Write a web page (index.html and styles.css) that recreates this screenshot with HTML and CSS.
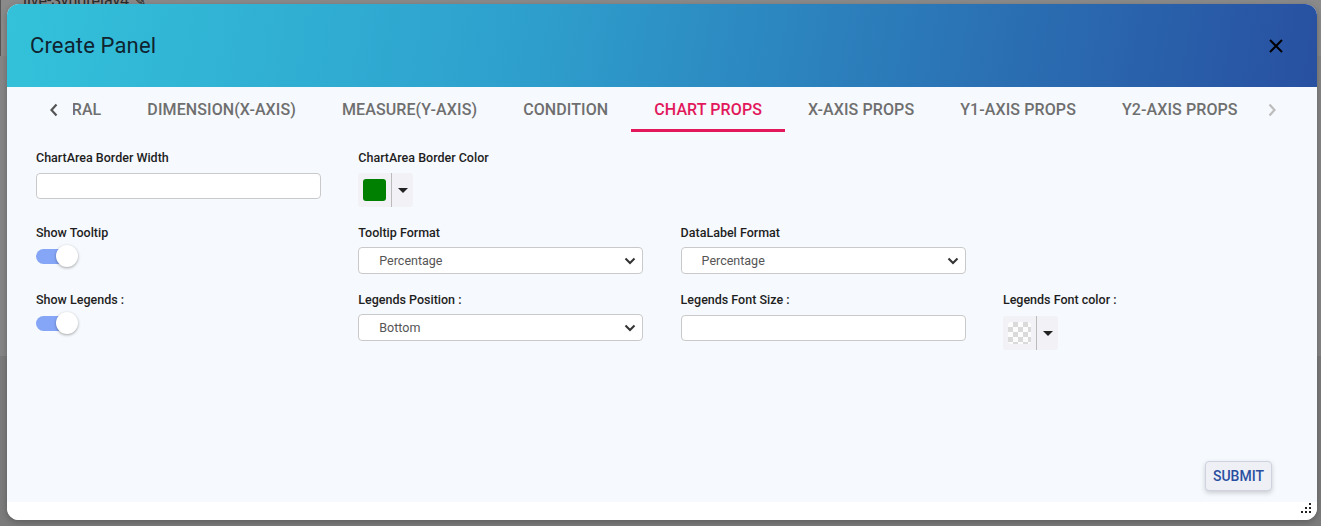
FILE: index.html
```html
<!DOCTYPE html>
<html>
<head>
<meta charset="utf-8">
<link rel="stylesheet" href="styles.css">
</head>
<body>
<div class="page">
  <div class="page-crumb">live-Syndrelay4 ✎</div>
  <div class="page-band"></div>
</div>
<div class="modal">
  <div class="modal-header">
    <h1 class="modal-title">Create Panel</h1>
    <button class="close-btn" aria-label="close">
      <svg width="14" height="14" viewBox="0 0 14 14"><path d="M1 1L13 13M13 1L1 13" stroke="#000" stroke-width="2" fill="none"/></svg>
    </button>
  </div>
  <div class="tabs">
    <div class="tab-arrow left">
      <svg width="10" height="14" viewBox="0 0 10 14"><path d="M7.5 1.5L2.5 7l5 5.5" stroke="#555" stroke-width="2.2" fill="none"/></svg>
    </div>
    <div class="tab-scroller">
      <div class="tab-strip">
        <div class="tab">GENERAL</div>
        <div class="tab">DIMENSION(X-AXIS)</div>
        <div class="tab">MEASURE(Y-AXIS)</div>
        <div class="tab">CONDITION</div>
        <div class="tab active">CHART PROPS</div>
        <div class="tab">X-AXIS PROPS</div>
        <div class="tab">Y1-AXIS PROPS</div>
        <div class="tab">Y2-AXIS PROPS</div>
      </div>
    </div>
    <div class="tab-arrow right">
      <svg width="10" height="14" viewBox="0 0 10 14"><path d="M2.5 1.5L7.5 7l-5 5.5" stroke="#bdbdbd" stroke-width="2.2" fill="none"/></svg>
    </div>
  </div>
  <div class="modal-content">
    <div class="form-grid">
      <div class="field">
        <label class="field-label">ChartArea Border Width</label>
        <input class="text-input" type="text">
      </div>
      <div class="field">
        <label class="field-label">ChartArea Border Color</label>
        <div class="color-picker">
          <span class="swatch green"></span>
          <span class="picker-split"></span>
          <span class="picker-caret"></span>
        </div>
      </div>
      <div class="field"></div>
      <div class="field"></div>

      <div class="field">
        <label class="field-label">Show Tooltip</label>
        <div class="toggle"><span class="toggle-track"></span><span class="toggle-knob"></span></div>
      </div>
      <div class="field">
        <label class="field-label">Tooltip Format</label>
        <div class="select"><span>Percentage</span>
          <svg width="12" height="8" viewBox="0 0 12 8"><path d="M1.5 1.5L6 6l4.5-4.5" stroke="#333" stroke-width="2" fill="none"/></svg>
        </div>
      </div>
      <div class="field">
        <label class="field-label">DataLabel Format</label>
        <div class="select"><span>Percentage</span>
          <svg width="12" height="8" viewBox="0 0 12 8"><path d="M1.5 1.5L6 6l4.5-4.5" stroke="#333" stroke-width="2" fill="none"/></svg>
        </div>
      </div>
      <div class="field"></div>

      <div class="field">
        <label class="field-label">Show Legends :</label>
        <div class="toggle"><span class="toggle-track"></span><span class="toggle-knob"></span></div>
      </div>
      <div class="field">
        <label class="field-label">Legends Position :</label>
        <div class="select"><span>Bottom</span>
          <svg width="12" height="8" viewBox="0 0 12 8"><path d="M1.5 1.5L6 6l4.5-4.5" stroke="#333" stroke-width="2" fill="none"/></svg>
        </div>
      </div>
      <div class="field">
        <label class="field-label">Legends Font Size :</label>
        <input class="text-input" type="text">
      </div>
      <div class="field">
        <label class="field-label">Legends Font color :</label>
        <div class="color-picker lower">
          <span class="swatch checker"></span>
          <span class="picker-split"></span>
          <span class="picker-caret"></span>
        </div>
      </div>
    </div>
    <div class="footer">
      <button class="submit-btn">SUBMIT</button>
    </div>
  </div>
  <div class="modal-bottom">
    <svg class="resize" width="12" height="12" viewBox="0 0 12 12" fill="#222">
      <rect x="9" y="0" width="2" height="2"/>
      <rect x="5" y="4" width="2" height="2"/><rect x="9" y="4" width="2" height="2"/>
      <rect x="1" y="8" width="2" height="2"/><rect x="5" y="8" width="2" height="2"/><rect x="9" y="8" width="2" height="2"/>
    </svg>
  </div>
</div>
</body>
</html>
```

FILE: styles.css
```css
* { box-sizing: border-box; }
html, body { margin: 0; padding: 0; }
body {
  width: 1321px;
  height: 526px;
  overflow: hidden;
  background: #7b7b7b;
  font-family: Roboto, "Liberation Sans", sans-serif;
  position: relative;
}
.page { height: 526px; }
.page-crumb {
  padding: 0 0 0 22px;
  margin-top: -9px;
  font-size: 16px;
  color: #2a2a2a;
  height: 65px;
  background: #8a8a8a;
  border-left: 1px solid #555;
}
.page-band { height: 300px; background: #858585; }

.modal {
  position: absolute;
  left: 7px;
  top: 4px;
  width: 1310px;
  height: 516px;
  border-radius: 12px;
  overflow: hidden;
  background: #fff;
  display: flex;
  flex-direction: column;
  box-shadow: 0 2px 6px rgba(0,0,0,0.25);
}
.modal-header {
  height: 83px;
  flex: none;
  display: flex;
  align-items: center;
  justify-content: space-between;
  padding: 0 34px 0 23px;
  background: linear-gradient(100deg, #33c2da 0%, #2e9fcd 40%, #2b77b7 70%, #2850a1 100%);
}
.modal-title {
  margin: 0;
  font-size: 22px;
  font-weight: 400;
  color: #0f2330;
  letter-spacing: 0.15px;
}
.close-btn {
  border: 0;
  background: none;
  padding: 0;
  width: 14px;
  height: 14px;
  display: flex;
}

.tabs {
  height: 45px;
  flex: none;
  display: flex;
  align-items: stretch;
  background: #f6f9fd;
}
.tab-arrow {
  display: flex;
  align-items: center;
  justify-content: center;
}
.tab-arrow.left { width: 66px; padding-left: 28px; }
.tab-arrow.right { width: 60px; padding-right: 30px; }
.tab-scroller {
  flex: 1;
  overflow: hidden;
  position: relative;
}
.tab-strip {
  display: flex;
  height: 100%;
  margin-left: -65px;
}
.tab {
  flex: none;
  padding: 0 23px;
  display: flex;
  align-items: center;
  font-size: 16px;
  font-weight: 500;
  color: #6f6f6f;
  letter-spacing: 0.1px;
  border-bottom: 3px solid transparent;
  padding-top: 3px;
}
.tab.active {
  color: #e2185b;
  border-bottom-color: #e2185b;
}

.modal-content {
  flex: 1;
  background: #f6f9fd;
  display: flex;
  flex-direction: column;
  padding: 19px 0 0 29px;
}
.form-grid {
  display: grid;
  grid-template-columns: repeat(4, 285px);
  column-gap: 37.3px;
  row-gap: 19px;
}
.field { display: flex; flex-direction: column; align-items: flex-start; }
.field-label {
  font-size: 12.5px;
  line-height: 14px;
  font-weight: 500;
  color: #1e1e1e;
  margin-bottom: 8px;
}
.text-input {
  width: 285px;
  height: 26px;
  border: 1px solid #c9c9c9;
  border-radius: 4px;
  background: #fff;
  margin: 0;
}
.color-picker {
  width: 55px;
  height: 34px;
  background: #f1f1f6;
  border-radius: 3px;
  display: flex;
  align-items: center;
  padding-left: 5px;
}
.color-picker.lower { margin-top: 1px; }
.swatch {
  width: 23px;
  height: 22px;
  border-radius: 3px;
  display: block;
}
.swatch.green { background: #008000; }
.swatch.checker {
  background-color: #fff;
  background-image:
    linear-gradient(45deg, #d6d6d6 25%, transparent 25%, transparent 75%, #d6d6d6 75%),
    linear-gradient(45deg, #d6d6d6 25%, transparent 25%, transparent 75%, #d6d6d6 75%);
  background-size: 10px 10px;
  background-position: 0 0, 5px 5px;
  opacity: 0.85;
}
.picker-split {
  width: 1px;
  height: 34px;
  background: #bbb;
  margin-left: 5px;
}
.picker-caret {
  width: 0; height: 0;
  border-left: 5px solid transparent;
  border-right: 5px solid transparent;
  border-top: 5px solid #222;
  margin-left: 6px;
}
.toggle {
  position: relative;
  width: 44px;
  height: 22px;
  margin-top: -3px;
}
.toggle-track {
  position: absolute;
  left: 0;
  top: 4px;
  width: 36px;
  height: 15px;
  border-radius: 8px;
  background: #85a6f7;
}
.toggle-knob {
  position: absolute;
  left: 20px;
  top: 0;
  width: 22px;
  height: 22px;
  border-radius: 50%;
  background: #fff;
  box-shadow: 0 1px 3px rgba(0,0,0,0.35);
}
.select {
  width: 285px;
  height: 27px;
  border: 1px solid #c9c9c9;
  border-radius: 4px;
  background: #fff;
  display: flex;
  align-items: center;
  justify-content: space-between;
  padding: 0 6px 0 20px;
  font-size: 12.5px;
  color: #555;
  margin-top: -1px;
}
.footer {
  margin-top: auto;
  display: flex;
  justify-content: flex-end;
  padding: 0 45px 11px 0;
}
.submit-btn {
  height: 30px;
  width: 67px;
  border: 1px solid #cfd3df;
  border-radius: 4px;
  background: #eef0f6;
  color: #2b4f9f;
  font-family: Roboto, "Liberation Sans", sans-serif;
  font-size: 14px;
  font-weight: 500;
  padding: 0;
  box-shadow: 0 2px 5px rgba(0,0,0,0.18);
}
.modal-bottom {
  height: 18px;
  flex: none;
  background: #fff;
  display: flex;
  justify-content: flex-end;
  align-items: flex-end;
  padding: 0 5px 5px 0;
}
```
